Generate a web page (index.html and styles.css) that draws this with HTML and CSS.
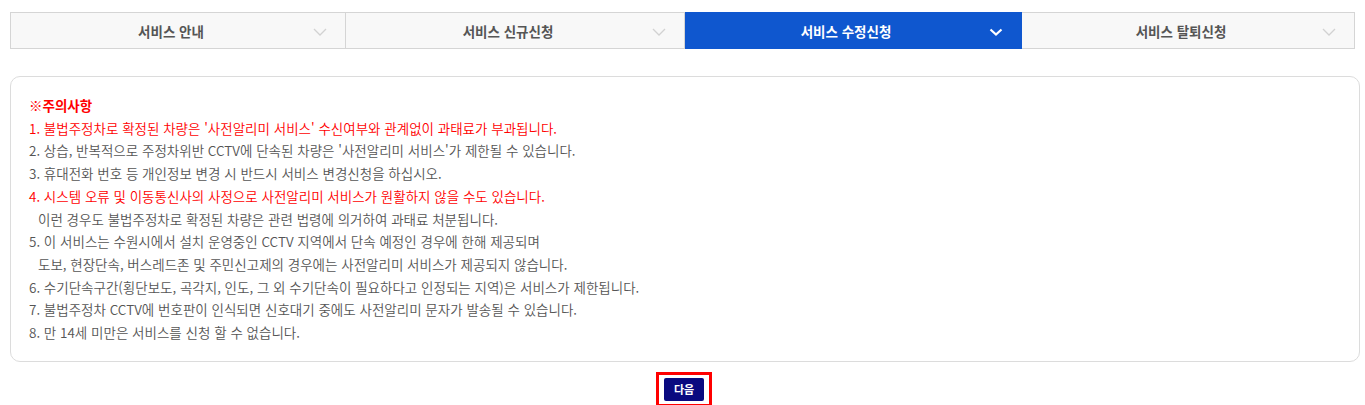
FILE: index.html
```html
<!DOCTYPE html>
<html lang="ko">
<head>
<meta charset="utf-8">
<title>서비스 수정신청</title>
<link rel="stylesheet" href="styles.css">
</head>
<body>
<div class="page">
  <ul class="tabs">
    <li class="tab"><span class="tab-label">서비스 안내</span><svg class="chev" viewBox="0 0 14 8" width="14" height="8"><path d="M1 1l6 6 6-6" fill="none" stroke="currentColor" stroke-width="1.3"/></svg></li>
    <li class="tab"><span class="tab-label">서비스 신규신청</span><svg class="chev" viewBox="0 0 14 8" width="14" height="8"><path d="M1 1l6 6 6-6" fill="none" stroke="currentColor" stroke-width="1.3"/></svg></li>
    <li class="tab active"><span class="tab-label">서비스 수정신청</span><svg class="chev" viewBox="0 0 14 8" width="14" height="8"><path d="M1.5 1.5l5.5 5 5.5-5" fill="none" stroke="currentColor" stroke-width="2.2"/></svg></li>
    <li class="tab"><span class="tab-label">서비스 탈퇴신청</span><svg class="chev" viewBox="0 0 14 8" width="14" height="8"><path d="M1 1l6 6 6-6" fill="none" stroke="currentColor" stroke-width="1.3"/></svg></li>
  </ul>

  <div class="notice">
    <p class="title red">※주의사항</p>
    <p class="red">1. 불법주정차로 확정된 차량은 '사전알리미 서비스' 수신여부와 관계없이 과태료가 부과됩니다.</p>
    <p>2. 상습, 반복적으로 주정차위반 CCTV에 단속된 차량은 '사전알리미 서비스'가 제한될 수 있습니다.</p>
    <p>3. 휴대전화 번호 등 개인정보 변경 시 반드시 서비스 변경신청을 하십시오.</p>
    <p class="red">4. 시스템 오류 및 이동통신사의 사정으로 사전알리미 서비스가 원활하지 않을 수도 있습니다.</p>
    <p class="indent">이런 경우도 불법주정차로 확정된 차량은 관련 법령에 의거하여 과태료 처분됩니다.</p>
    <p>5. 이 서비스는 수원시에서 설치 운영중인 CCTV 지역에서 단속 예정인 경우에 한해 제공되며</p>
    <p class="indent">도보, 현장단속, 버스레드존 및 주민신고제의 경우에는 사전알리미 서비스가 제공되지 않습니다.</p>
    <p>6. 수기단속구간(횡단보도, 곡각지, 인도, 그 외 수기단속이 필요하다고 인정되는 지역)은 서비스가 제한됩니다.</p>
    <p>7. 불법주정차 CCTV에 번호판이 인식되면 신호대기 중에도 사전알리미 문자가 발송될 수 있습니다.</p>
    <p>8. 만 14세 미만은 서비스를 신청 할 수 없습니다.</p>
  </div>

  <div class="actions">
    <span class="focus-ring"><button class="btn" type="button">다음</button></span>
  </div>
</div>
</body>
</html>
```

FILE: styles.css
```css
* { box-sizing: border-box; }
html, body { margin: 0; padding: 0; background: #fff; }
body {
  font-family: "Noto Sans CJK KR", "Noto Sans", sans-serif;
  color: #555;
}
.page { padding: 12px 5px 0 10px; }

.tabs {
  list-style: none;
  margin: 0;
  padding: 0;
  display: grid;
  grid-template-columns: 336px 339px 337px 333px;
  height: 37px;
}
.tab {
  position: relative;
  display: flex;
  align-items: center;
  justify-content: center;
  background: #f8f8f8;
  border: 1px solid #d5d5d5;
  border-left: none;
  padding-right: 14px;
  font-size: 13.5px;
  font-weight: 700;
  color: #555;
}
.tab:first-child { border-left: 1px solid #d5d5d5; }
.tab.active {
  background: #0f57cf;
  border-color: #0f57cf;
  color: #fff;
}
.chev {
  position: absolute;
  right: 18px;
  top: 15px;
  color: #d2d2d2;
}
.active .chev { color: #fff; }

.notice {
  margin-top: 27px;
  border: 1px solid #dcdcdc;
  border-radius: 10px;
  padding: 17px 18px 17px 18px;
  width: 1350px;
}
.notice p {
  margin: 0;
  font-size: 13.5px;
  font-weight: 350;
  line-height: 22.7px;
  color: #555;
}
.notice p.red { color: #ff0000; }
.notice p.title { font-weight: 700; }
.notice p.indent { padding-left: 9px; }

.actions {
  display: flex;
  justify-content: center;
  margin-top: 10px;
  padding-right: 2px;
}
.focus-ring {
  display: inline-flex;
  border: 3px solid #ff0000;
  padding: 3px 5px;
}
.btn {
  width: 40px;
  height: 23px;
  border: none;
  border-radius: 2px;
  background: #0a0a80;
  color: #fff;
  font-family: "Noto Sans CJK KR", sans-serif;
  font-size: 11px;
  font-weight: 700;
  padding: 0;
  line-height: 23px;
}
```
